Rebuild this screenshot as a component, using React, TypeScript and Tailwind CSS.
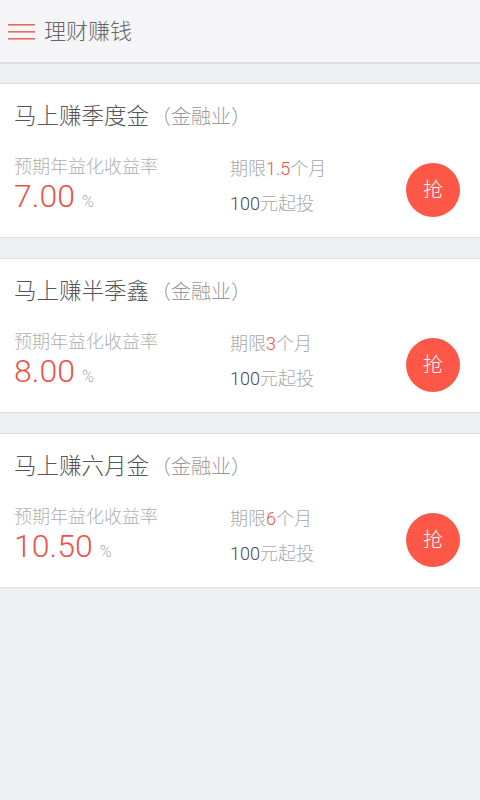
import React from "react"

const font = { fontFamily: '"Roboto", "Noto Sans CJK SC", sans-serif' }

const products = [
  { name: "马上赚季度金", rate: "7.00", term: "1.5" },
  { name: "马上赚半季鑫", rate: "8.00", term: "3" },
  { name: "马上赚六月金", rate: "10.50", term: "6" },
]

const Card = ({ name, rate, term }: { name: string; rate: string; term: string }) => {
  return (
    <div className="bg-white border-y border-[#dcdde0] h-[155px] pl-[14px] pt-[20px]">
      <div className="flex items-baseline h-[24px] leading-[24px]">
        <span className="text-[22.5px] text-[#555555] font-light">{name}</span>
        <span className="text-[20px] text-[#9a9a9a] font-light ml-[2px]">（金融业）</span>
      </div>
      <div className="flex items-start mt-[28px]">
        <div className="w-[216px]">
          <p className="text-[18px] leading-[22px] text-[#b0b0b0] font-light">预期年益化收益率</p>
          <p className="flex items-baseline h-[36px] leading-[36px]">
            <span className="text-[32px] text-[#ea5448] font-light">{rate}</span>
            <span className="text-[16px] text-[#aaaaaa] font-light ml-[7px]">%</span>
          </p>
        </div>
        <div className="pt-[2px] font-light">
          <p className="text-[18px] leading-[22px] text-[#a8a8a8]">
            期限<span className="text-[#ea5448]">{term}</span>个月
          </p>
          <p className="text-[18px] leading-[22px] text-[#a8a8a8] mt-[13px]">
            <span className="text-[#4a4a4a]">100</span>元起投
          </p>
        </div>
        <button className="ml-auto mr-[20px] mt-[7px] w-[54px] h-[54px] rounded-full bg-[#fd5847] text-white text-[20px] font-light flex items-center justify-center">
          抢
        </button>
      </div>
    </div>
  )
}

export default function App() {
  return (
    <div className="w-[480px] h-[800px] bg-[#eeeff2]" style={font}>
      <header className="h-[64px] bg-[#f5f5f7] border-b-2 border-[#dcdde0] flex items-center pl-[8px]">
        <svg width="27" height="18" viewBox="0 0 27 18" className="mt-[1px]">
          <rect x="0" y="1" width="27" height="1.6" fill="#e76a5f" />
          <rect x="0" y="8" width="27" height="1.6" fill="#e76a5f" />
          <rect x="0" y="15" width="27" height="1.6" fill="#e76a5f" />
        </svg>
        <h1 className="ml-[9px] text-[22px] text-[#666666] font-light">理财赚钱</h1>
      </header>
      <div className="flex flex-col gap-[20px] pt-[19px]">
        {products.map((p) => (
          <Card key={p.name} {...p} />
        ))}
      </div>
    </div>
  )
}
